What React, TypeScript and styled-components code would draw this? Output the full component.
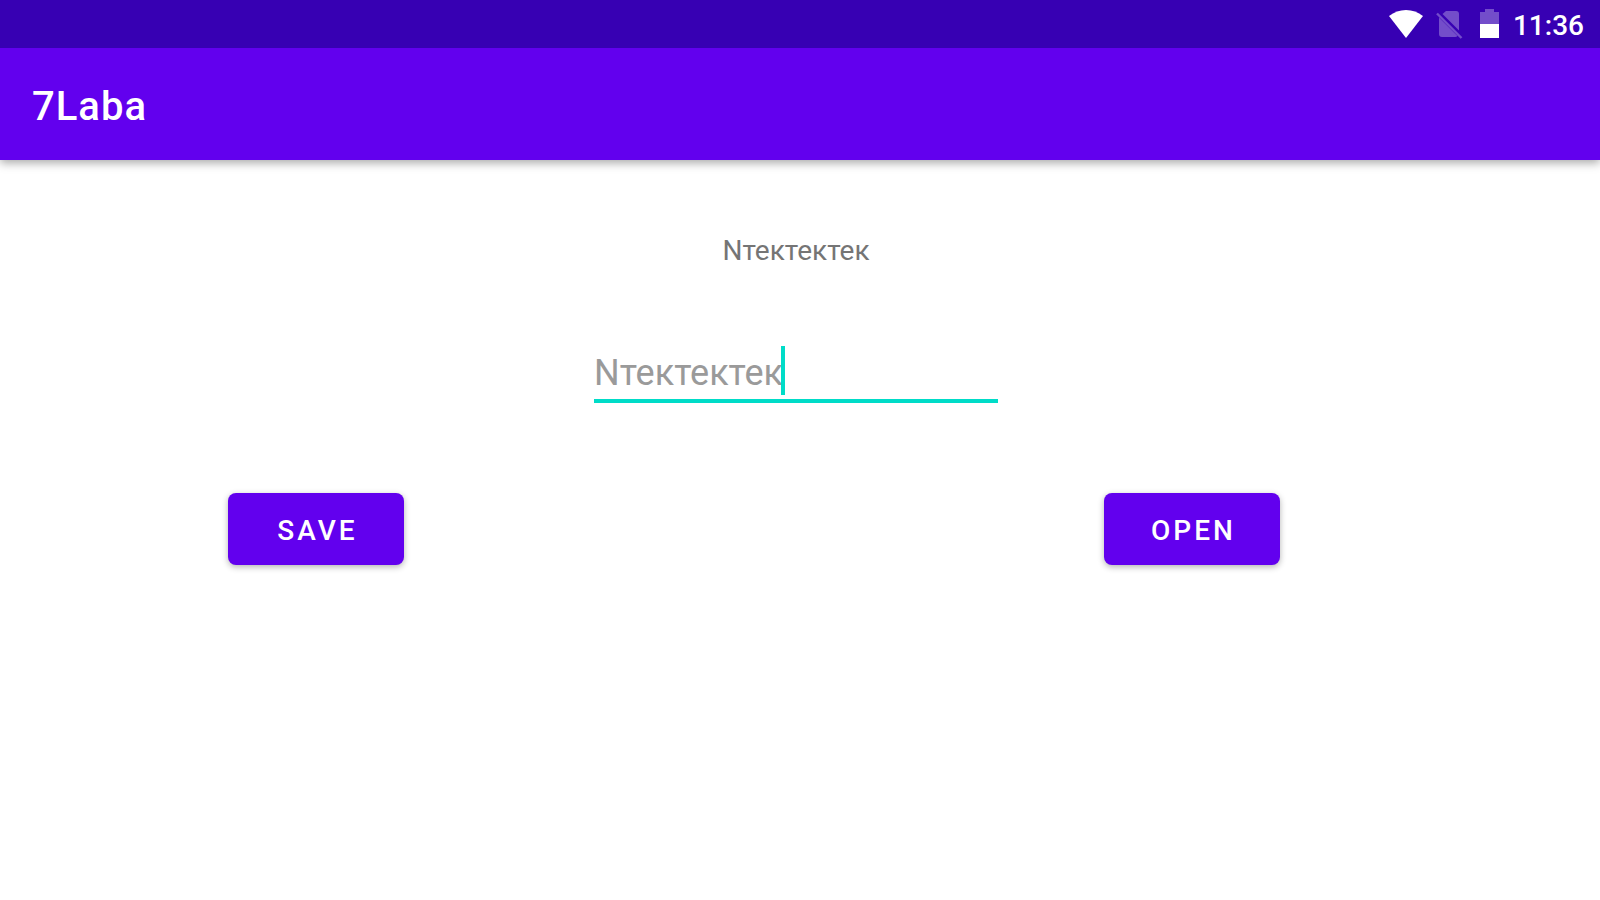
import { useState } from "react";
import styled, { createGlobalStyle } from "styled-components";

const GlobalStyle = createGlobalStyle`
  * { box-sizing: border-box; }
  body {
    margin: 0;
    background: #fff;
    font-family: Roboto, "Noto Sans", sans-serif;
  }
`;

const Screen = styled.div`
  min-height: 100vh;
  background: #fff;
`;

const StatusBar = styled.div`
  position: relative;
  z-index: 1;
  display: flex;
  align-items: center;
  justify-content: flex-end;
  height: 48px;
  padding-right: 16px;
  background: #3700b3;
  color: #fff;
`;

const StatusIcon = styled.svg`
  display: block;
  flex: none;
`;

const Clock = styled.time`
  margin-left: 4px;
  padding-top: 4px;
  font-size: 28px;
  font-weight: 500;
  line-height: 32px;
`;

const AppBar = styled.header`
  display: flex;
  align-items: center;
  height: 112px;
  padding: 6px 32px 0;
  background: #6200ee;
  box-shadow: 0 3px 9px rgba(0, 0, 0, 0.34);
`;

const Title = styled.h1`
  margin: 0;
  color: #fff;
  font-size: 40px;
  font-weight: 500;
  line-height: 48px;
  letter-spacing: 1px;
`;

const Content = styled.main`
  display: flex;
  flex-direction: column;
  padding-bottom: 32px;
`;

const Form = styled.div`
  display: flex;
  flex-direction: column;
  align-items: center;
  gap: 71px;
  padding: 75px 8px 0 0;
`;

const Output = styled.output`
  color: #757575;
  font-size: 28px;
  line-height: 32px;
`;

const Field = styled.label`
  position: relative;
  width: 404px;
  height: 65px;
  border-bottom: 4px solid #00dcc8;
`;

const TextInput = styled.input`
  display: block;
  width: 100%;
  height: 48px;
  margin-top: 11px;
  padding: 0;
  border: 0;
  outline: 0;
  background: transparent;
  color: #9a9a9a;
  caret-color: transparent;
  font-family: inherit;
  font-size: 36px;
`;

const Caret = styled.span`
  position: absolute;
  top: 8px;
  left: 187px;
  width: 4px;
  height: 49px;
  background: #00dcc8;
`;

const Actions = styled.div`
  display: flex;
  justify-content: space-between;
  padding: 90px 20% 0 14.25%;
`;

const ActionButton = styled.button`
  width: 176px;
  height: 72px;
  padding: 2px 0 0 3px;
  border: 0;
  border-radius: 8px;
  background: #6200ee;
  box-shadow: 0 2px 6px rgba(0, 0, 0, 0.3);
  color: #fff;
  font-family: inherit;
  font-size: 28px;
  font-weight: 500;
  letter-spacing: 3px;
  text-transform: uppercase;
`;

export default function App() {
  const [text, setText] = useState("Nтектектек");

  return (
    <Screen>
      <GlobalStyle />
      <StatusBar>
        <StatusIcon width="124" height="48" viewBox="0 0 124 48" aria-hidden="true">
          <path d="M21 38L4 16Q11.5 10 21 10Q30.5 10 38 16Z" fill="#fff" />
          <g fill="#fff" fillOpacity="0.3">
            <path d="M61 11H71Q74 11 74 14V30.5L57.5 14Z" />
            <path d="M54 17.5L72.5 36Q71.5 37 70 37H57Q54 37 54 34Z" />
          </g>
          <path d="M52 13.5L76.5 38" stroke="#fff" strokeOpacity="0.3" strokeWidth="2.4" />
          <path d="M100 9H109V12H114V24H95V12H100Z" fill="#fff" fillOpacity="0.3" />
          <path d="M95 24H114V38H95Z" fill="#fff" />
        </StatusIcon>
        <Clock>11:36</Clock>
      </StatusBar>
      <AppBar>
        <Title>7Laba</Title>
      </AppBar>
      <Content>
        <Form>
          <Output htmlFor="entry">{text}</Output>
          <Field htmlFor="entry">
            <TextInput
              id="entry"
              type="text"
              aria-label="Text"
              value={text}
              onChange={(e) => setText(e.target.value)}
            />
            <Caret />
          </Field>
        </Form>
        <Actions>
          <ActionButton type="button">Save</ActionButton>
          <ActionButton type="button">Open</ActionButton>
        </Actions>
      </Content>
    </Screen>
  );
}
